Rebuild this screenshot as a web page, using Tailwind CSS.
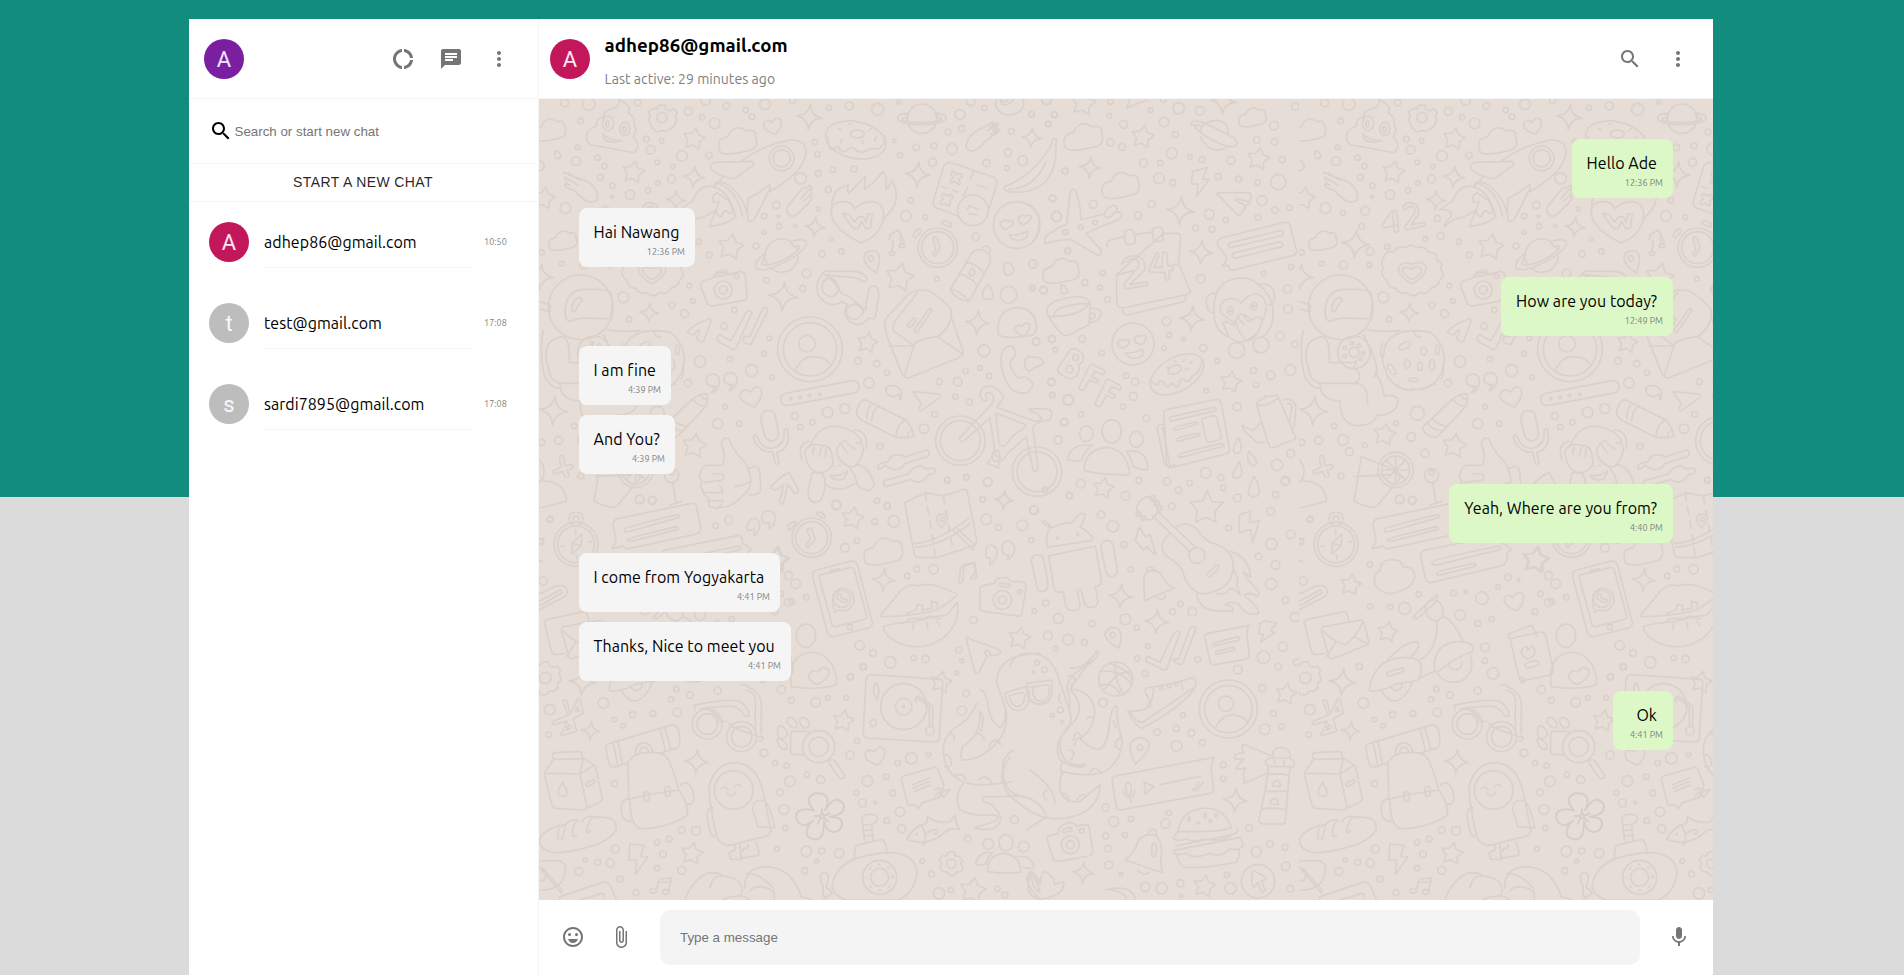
<!DOCTYPE html>
<html lang="en">
<head>
<meta charset="utf-8">
<title>Chat</title>
<script src="https://cdn.jsdelivr.net/npm/@tailwindcss/browser@4"></script>
</head>
<body class="h-screen overflow-hidden bg-[#dbdbdb] font-['Ubuntu','Noto_Sans',sans-serif] tracking-[0.05px] text-black">
<svg class="hidden">
  <symbol id="i-search" viewBox="0 0 24 24"><path d="M15.5 14h-.79l-.28-.27C15.41 12.59 16 11.11 16 9.5 16 5.91 13.09 3 9.5 3S3 5.91 3 9.5 5.91 16 9.5 16c1.61 0 3.09-.59 4.23-1.57l.27.28v.79l5 4.99L20.49 19l-4.99-5zm-6 0C7.01 14 5 11.99 5 9.5S7.01 5 9.5 5 14 7.01 14 9.5 11.99 14 9.5 14z"/></symbol>
  <symbol id="i-more" viewBox="0 0 24 24"><path d="M12 8c1.1 0 2-.9 2-2s-.9-2-2-2-2 .9-2 2 .9 2 2 2zm0 2c-1.1 0-2 .9-2 2s.9 2 2 2 2-.9 2-2-.9-2-2-2zm0 6c-1.1 0-2 .9-2 2s.9 2 2 2 2-.9 2-2-.9-2-2-2z"/></symbol>
  <symbol id="i-ring" viewBox="0 0 24 24"><path d="M11 5.08V2c-5 .5-9 4.81-9 10s4 9.5 9 10v-3.08c-3-.48-6-3.4-6-6.92s3-6.44 6-6.92zM18.97 11H22c-.47-5-4-8.53-9-9v3.08C16 5.51 18.54 8 18.97 11zM13 18.92V22c5-.47 8.53-4 9-9h-3.03c-.43 3-2.97 5.49-5.97 5.92z"/></symbol>
  <symbol id="i-chat" viewBox="0 0 24 24"><path d="M20 2H4c-1.1 0-1.99.9-1.99 2L2 22l4-4h14c1.1 0 2-.9 2-2V4c0-1.1-.9-2-2-2zM6 9h12v2H6V9zm8 5H6v-2h8v2zm4-6H6V6h12v2z"/></symbol>
  <symbol id="i-smile" viewBox="0 0 24 24"><circle cx="15.5" cy="9.5" r="1.5"/><circle cx="8.5" cy="9.5" r="1.5"/><path d="M11.99 2C6.47 2 2 6.48 2 12s4.47 10 9.99 10C17.52 22 22 17.52 22 12S17.52 2 11.99 2zM12 20c-4.42 0-8-3.58-8-8s3.58-8 8-8 8 3.58 8 8-3.58 8-8 8zm-5-6c.78 2.34 2.72 4 5 4s4.220-1.66 5-4H7z"/></symbol>
  <symbol id="i-clip" viewBox="0 0 24 24"><path d="M16.500 6v11.500c0 2.210-1.790 4-4 4s-4-1.790-4-4V5c0-1.380 1.120-2.500 2.500-2.500s2.500 1.120 2.500 2.500v10.500c0 .550-.450 1-1 1s-1-.450-1-1V6H10v9.500c0 1.380 1.120 2.500 2.500 2.500s2.500-1.120 2.500-2.500V5c0-2.210-1.790-4-4-4S7 2.790 7 5v12.500c0 3.040 2.460 5.500 5.500 5.500s5.500-2.460 5.500-5.500V6h-1.500z"/></symbol>
  <symbol id="i-mic" viewBox="0 0 24 24"><path d="M12 14c1.66 0 2.990-1.340 2.990-3L15 5c0-1.660-1.340-3-3-3S9 3.340 9 5v6c0 1.660 1.340 3 3 3zm5.300-3c0 3-2.540 5.100-5.300 5.100S6.700 14 6.700 11H5c0 3.410 2.720 6.230 6 6.720V21h2v-3.280c3.280-.480 6-3.300 6-6.720h-1.700z"/></symbol>
</svg>

<div class="h-[497px] bg-[#128c7e]">
  <div class="mx-auto flex h-[975px] w-[1524px] translate-x-[-1px] pt-[19px]">
    <aside class="flex w-[350px] shrink-0 flex-col border-r border-[#f5f5f5] bg-white">
      <header class="flex h-20 items-center border-b border-[#f5f5f5] px-[15px]">
        <div class="flex size-10 items-center justify-center rounded-full bg-[#7b1fa2] pt-px font-[Roboto] text-[22px] text-white/90">A</div>
        <div class="ml-auto flex gap-6 pr-3 text-[#757575]">
          <svg class="size-6" fill="currentColor"><use href="#i-ring"/></svg>
          <svg class="size-6" fill="currentColor"><use href="#i-chat"/></svg>
          <svg class="size-6" fill="currentColor"><use href="#i-more"/></svg>
        </div>
      </header>
      <label class="flex h-16 items-center pl-5">
        <svg class="size-6" fill="currentColor"><use href="#i-search"/></svg>
        <input class="w-64 pt-0.5 pl-[1.5px] font-['Liberation_Sans'] text-[13.333px] tracking-normal outline-none placeholder:text-[#757575]" placeholder="Search or start new chat">
      </label>
      <button class="h-[39px] rounded border border-x-transparent border-y-[#f5f5f5] pr-px pb-px font-['Liberation_Sans'] text-sm tracking-[0.4px] text-black/87">START A NEW CHAT</button>
      <div class="flex h-[81px] items-start pt-5 pl-5">
        <div class="flex size-10 items-center justify-center rounded-full bg-[#c2185b] pt-px font-[Roboto] text-[22px] text-white/90">A</div>
        <div class="ml-[15px] h-[46px] w-[210px] border-b border-[#f5f5f5] pt-2 text-base leading-6 whitespace-nowrap">adhep86@gmail.com</div>
        <span class="mt-3 ml-[10px] text-[9px] leading-4 text-[#808080]">10:50</span>
      </div>
      <div class="flex h-[81px] items-start pt-5 pl-5">
        <div class="flex size-10 items-center justify-center rounded-full bg-[#bdbdbd] font-[Roboto] text-[22px] text-white/90">t</div>
        <div class="ml-[15px] h-[46px] w-[210px] border-b border-[#f5f5f5] pt-2 text-base leading-6 whitespace-nowrap">test@gmail.com</div>
        <span class="mt-3 ml-[10px] text-[9px] leading-4 text-[#808080]">17:08</span>
      </div>
      <div class="flex h-[81px] items-start pt-5 pl-5">
        <div class="flex size-10 items-center justify-center rounded-full bg-[#bdbdbd] font-[Roboto] text-[22px] text-white/90">s</div>
        <div class="ml-[15px] h-[46px] w-[210px] border-b border-[#f5f5f5] pt-2 text-base leading-6 whitespace-nowrap">sardi7895@gmail.com</div>
        <span class="mt-3 ml-[10px] text-[9px] leading-4 text-[#808080]">17:08</span>
      </div>
    </aside>

    <main class="flex min-w-0 flex-1 flex-col bg-white">
      <header class="flex h-20 items-center border-b border-[#f5f5f5] pr-[23px] pl-[11px]">
        <div class="flex size-10 items-center justify-center rounded-full bg-[#c2185b] pt-px font-[Roboto] text-[22px] text-white/90">A</div>
        <div class="ml-[14.5px] flex h-full flex-col pt-[13px] whitespace-nowrap">
          <h3 class="text-[18.72px] leading-7 font-bold">adhep86@gmail.com</h3>
          <p class="mt-[9px] text-sm leading-5 text-[#808080]">Last active: 29 minutes ago</p>
        </div>
        <div class="ml-auto flex gap-6 text-[#757575]">
          <svg class="size-6" fill="currentColor"><use href="#i-search"/></svg>
          <svg class="size-6" fill="currentColor"><use href="#i-more"/></svg>
        </div>
      </header>

      <section class="relative h-[801px] overflow-hidden bg-[#e5ddd6]">
        <svg class="absolute inset-0 h-full w-full" fill="none" stroke="#dad1cb" stroke-width="5" stroke-linecap="round" stroke-linejoin="round">
          <defs><clipPath id="edge"><rect width="760" height="801"/></clipPath></defs>
          <g id="doodle" clip-path="url(#edge)">
            <!-- upper left -->
            <g id="gP" transform="translate(-269,-9) scale(.33333)">
              <path d="M950 145q-8-22 30-38q-4-25 22-27q-4-20 28-23q20-10 18-30q10 8 24 18q10 12 4 25q20 10 16 34q12 22-2 36q20 24 10 40q-6 10-20 6L965 165q-14-6-15-20zM998 132q20 20 58 20M1000 130q-4 20 16 24q30 6 40-4"/>
              <ellipse cx="1014" cy="100" rx="17" ry="22"/><ellipse cx="1064" cy="117" rx="15" ry="20"/><ellipse cx="1013" cy="101" rx="5" ry="9"/><ellipse cx="1063" cy="118" rx="5" ry="9"/>
              <path d="M1166 46h18l4 12l12 4l12-6l10 12l-6 12l4 10l-6 16l-12 10l-12 8l-14-2l-14 4l-14-10l-6-12l-6-12l4-12l-4-14l12-10l12 0zM1166 46l-4 12"/><circle cx="1176" cy="83" r="15"/>
              <path d="M880 250q6-6 16 4l34 12q50 16 53 52q0 20-22 18q-20-2-48-34q-30-8-29-18q6-4 16 2q-18-14-14-19q6-4 18 6l20 12M885 262l30 18M897 251l30 17"/>
              <path d="M1084 364l-28 44q0 8 10 5l38-8M1090 362q8-4 10 4l6 56q-5 8-13 3l-5-50zM1118 352q10-18 32-12q22 10 14 34l-20 30l38-6q8 4 2 9l-52 13q-10-3-6-12l28-40q4-16-8-18q-12-1-18 8q-10 2-10-6z"/>
              <path d="M1105 535q10-24 40-12q30-14 42 6q6 26-42 52q-36-18-40-46zM1117 537q8-12 26 0q20-13 32 2q0 14-30 30q-26-16-28-32z"/>
              <path d="M1060 505q8-26 30-18q14-22 34-14q20-14 36 0q26-6 36 14q24-2 24 22q22 10 12 28q16 20-4 34q0 20-24 22q-12 24-34 14q-20 18-38 2q-26 6-34-14q-26 0-26-24q-26-16-12-36q-10-20 0-30z"/>
              <circle cx="932" cy="652" r="97"/>
              <path d="M885 670q0-70 60-72q60-2 78 10q10 30-2 76q-20 4-60 0q-40 0-54 8q-20 6-22-22zM906 662q-2-30 22-40q14 4 4 14q-10 10-14 24q-6 8-12 2zM860 745q-40 10-30 70l10 40q10 25 40 25h90q24-6 16-30q0-10-18-14q10-10 12-24q-16 10-22 6h-60v-16q0-80-38-57zM1010 718q40 10 100 4M1000 735q60 110 30 125M870 880q0 52 60 52q0 75 58 75q50-6 50-30q70-4 65-50q-16-16-40-8q-6-40-26-70M890 880h90q35 4 33 62M820 720q-14 60 4 140q20 36 44 34M810 635l30 10v20l-30-8"/>
              <circle cx="972" cy="787" r="49"/><circle cx="972" cy="787" r="15"/><circle cx="965" cy="760" r="5"/><circle cx="987" cy="767" r="5"/><circle cx="1000" cy="790" r="5"/><circle cx="991" cy="806" r="5"/><circle cx="945" cy="773" r="5"/><circle cx="945" cy="799" r="5"/>
              <path d="M1062 790q0-50 60-66q50-6 80 4q30 20 40 66q6 50-30 86q-40 26-90 18q-50-20-56-60q-14-24-4-48z"/>
              <ellipse cx="1124" cy="767" rx="20" ry="9" transform="rotate(-25 1124 767)"/><ellipse cx="1181" cy="783" rx="9" ry="12"/><ellipse cx="1132" cy="822" rx="9" ry="13"/><ellipse cx="1170" cy="829" rx="7" ry="13"/><ellipse cx="1150" cy="869" rx="15" ry="5"/><ellipse cx="1085" cy="838" rx="8" ry="18" transform="rotate(-35 1085 838)"/><ellipse cx="1206" cy="825" rx="8" ry="16"/><ellipse cx="1222" cy="780" rx="6" ry="14"/><path d="M1057 760q-10 30 0 44M1100 885q30 24 50 10M1175 900l40-18M1237 830q8 20-4 36M1150 725q10 20 22 16"/>
              <path d="M1180 1010l90-85q20-14 42-14q2 24-6 40l-80 85q-16 12-30 0q-20-10-16-26zM1190 995q8 20 42 28M1206 982q10 22 42 26M1270 925q6 20 30 24M1290 914q4 10 20 14"/>
              <path d="M994 1100l58 22q30 10 60 40l-70 85q-18 14-70-14zM975 1160l110-6"/><circle cx="1097" cy="1140" r="53"/><circle cx="1097" cy="1140" r="42"/><path d="M1097 1100v80M1057 1140h80M1069 1112l56 56M1069 1168l56-56"/>
              <path d="M870 1098q14-4 12 10l4 20l20-4q8 6-2 12l-14 6q10 14 4 18q-8 4-12-6l-4-10l-24 8q-10-2-2-10l22-12q-8-24-4-32z"/>
              <circle cx="1205" cy="1157" r="21"/><circle cx="1205" cy="1148" r="7"/><path d="M1208 1178l10 60M1200 1246l36-12M802 1105q20 15 20 40t-16 30M800 215q20-8 23 14q-4 14-16 12M858 182q16 6 14 20q-8 8-16 0q-4-6 2-20z"/>
            </g>
            <!-- upper middle -->
            <g id="gQ" transform="translate(141,-9) scale(.33333)">
              <path d="M180 215q70-50 150-65q50-2 48 40q-10 60-110 115M92 235q-2-16 16-18l102-3q16 0 8 12l-45 34q-15 9-30 3q-42-14-51-28zM205 325q40-20 58-38q10-6 7 8l-45 90q-10 16-20 6q-5-26 0-66zM130 260l-30 30q-45-6-62 44l-40 25q40-4 35 20q-20 20-20 32q28-30 50-26l46-24q-10 16-20 48q50-4 80-30M106 278q60 12 82 100M120 274q60 20 82 95M98 290q50 10 68 90M110 308q-20 16-8 30l16-2q-20 40 6 44q4-16 14-18q14 14 22 4q-8-36-30-46z"/>
              <circle cx="305" cy="205" r="37"/><circle cx="305" cy="205" r="26"/>
              <ellipse cx="527" cy="150" rx="92" ry="55" transform="rotate(12 527 150)"/><ellipse cx="532" cy="132" rx="21" ry="12"/><path d="M443 140q0 40 18 40q6-18 16-6q6 18 22 8q12-12 24-6q14 16 34 8q20-12 32-6q26-8 26-40M475 114l8 8M506 102h10M487 148l-6 10M546 152l4 8M575 114l-8 8M590 140l-6 14"/>
              <circle cx="726" cy="86" r="44"/><path d="M682 70q-34 0-28 20q20 14 72 14t72-16q4-16-26-18v12q14 0 12 6q-20 10-58 10t-60-8q0-10 16-8z" fill="#e5ddd6"/>
              <path d="M455 365q-5-70 50-80q-5 15 2 25l50-52q-4 20-4 40q30-20 55-53q14 8 10 54q12-10 16-28q40 60-24 116M543 459q-90-44-90-96q4-30 40-28q26 2 30 22q20-20 48-22q40 0 40 40q-4 60-68 84zM487 370l32 46h16l10-22l12 22h14l6-44h-14l-4 24l-10-16h-12l-14 16l-16-24z"/>
              <path d="M322 350l45-55q6-6 10 2l8-10q10-2 10 8l-2 26q6 6-4 14l-34 36q-14 12-28 4q-10-12-5-25zM362 327l28-32M372 332l22-20"/>
              <path d="M860 160q6-30 54-50l24-14q6 4-2 12l-8 6l22-14q8 2 2 10l-14 12l14-6q8 4 0 12l-20 14l-18 14q-20 26-40 28q-22-4-14-24zM922 122l30-18M932 134l28-16"/>
              <path d="M790 230q8-14 24-12l124 42q16 8 12 24l-26 80M790 230l-30 105q-4 14 12 20l64 24M882 244l-12 24M850 318l12-26M786 290l14 4M818 300l16 6"/><circle cx="879" cy="361" r="46"/>
              <path d="M816 245q10-4 10 10q14-8 22 0q-2 8-12 12q8 14 2 16q-8 0-14-10q-12 10-14 2q2-8 10-12q-10-12-4-18zM786 312q8-4 12 6q12-8 22 2q-2 8-12 12q8 14-2 16q-6-2-8-8q-14 8-18 0q0-8 10-12q-6-10-4-16zM892 284l28 10M862 358l6-10l28 10M866 372l26 2"/>
              <path d="M975 290q86-36 136-118l8-26h10l-2 20q6 60-26 104q-40 46-118 34q-16-6-8-14zM986 298q80-4 110-80"/>
              <circle cx="1010" cy="405" r="70"/><path d="M960 400q14-16 24-6q12-8 16 4q-2 14-26 20q-14-8-14-18zM1014 384q16-14 22-4q12-10 18 0q-2 14-26 26q-12-10-14-22zM988 434q30 4 54-10q4 22-20 26q-28 4-34-16zM950 30q-10 10 4 30q30 30 70 0q14-20 2-34M960 30q10 30 40 0M964 30q10 12 20 0"/>
              <circle cx="773" cy="473" r="59"/><circle cx="773" cy="473" r="48"/><path d="M760 442q8-4 12 4l8 28l-14 24q-8 0-6-8l8-16l-8-20zM700 440q0-20 20-24q8 10-14 28zM784 400q8-16 28 0q4 10-2 12zM630 435l26-16l16 36M640 450l-4 36M628 448l2-14M660 440l4 20"/><ellipse cx="636" cy="490" rx="8" ry="6"/><ellipse cx="666" cy="467" rx="8" ry="6"/>
              <path d="M590 550q-40-26-38-48q6-22 28-20q20 4 18 30q-2 16-10 38z"/><circle cx="573" cy="505" r="8"/>
              <path d="M810 600l64-108q10-18 36-12q26 10 20 38l-62 116q-40-4-58-34zM810 600q20-6 58 34M836 552q36 4 56 36M858 516q38 6 56 38M908 472q16-10 24 8l-6 14M876 535q14 8 6 20q-8 6-14-2q-2-8 8-18z"/>
              <circle cx="305" cy="497" r="50"/><path d="M256 490q-34 24-28 42q10 18 70-8t82-60q0-24-44-10q-6 6 6 16l12-2q10 4-4 16q-40 34-90 42q-20 0-10-14z" fill="#e5ddd6"/>
              <path d="M62 590q0-16 14-20l24-6q4-18 20-20q20-10 26 10l34-10q14 0 16 16l5 60q0 10-14 12l-88 16q-14 2-18-12zM106 560l0-8l28-5q8 4 2 10z"/><circle cx="130" cy="600" r="27"/><circle cx="130" cy="600" r="12"/><circle cx="169" cy="559" r="7"/>
              <path d="M412 600q-4-28 14-48q6-12 20-8h80q34 6 34 24q-6 12-16 4q-8-10-30-10l-84-8q30 10 50 50q6 10 22 12l54 44q4-30 10-55q-2-10 10-16q20-8 20 30q-4 30-10 64q-8 6-18 0q-32 36-62 8q-20-24-4-48q-10-4-14-8q-36 20-62-6q-14-12-14-29zM430 575q-10 20 2 34q20 20 36 4q16-20 0-36q-14-26-38-2zM500 660q10-20 28-16q22 10 22 22q-10 26-36 20q-20-8-14-26z"/>
              <path d="M614 700q0-14 20-32l50-54q12-14 50-14q20 0 70 46q14 12 8 30l38 110q0 14-30 24l-130 52q-10 6-22-6l-48-120zM640 722q-4-14 6-30l66-84M640 722l60 44q16-20 72-26q36-24 42-64M628 768h74l-30 92M772 740l76 52M812 686q-4 28-34 52M682 710q0-8 20-28q10 4 4 10q-10 24-24 18zM702 720l44-62q10-6 8 6l-42 62q-8 4-10-6z"/>
              <circle cx="390" cy="778" r="97"/><circle cx="390" cy="778" r="80"/><circle cx="381" cy="761" r="25"/><path d="M348 838q18-42 60-38q32 4 46 26"/>
              <path d="M22 726q4-8 30-24l34-16q8-2 6 10l-20 56q-4 6-14 2l-8-10l10-24h-8l-10 14q-10 2-20-8zM112 742q4-12 14-4l28 14l44-84q10-10 18 0l-48 106q-8 8-14 2l-36-20q-8-6-6-14zM192 740q10-2 16 2l40-86q12-8 16 6l-52 102q-24-4-22-14z"/>
              <path d="M95 908q4-14 12-20q-26 4-28-16q0-20 20-20q24 2 18 30q-6 24-22 26zM148 902q4-14 10-18q-24 2-26-16q2-20 20-20q24 4 18 28q-6 22-22 26zM660 930q0-12-4-18q-12 14-30 4q-18-20 0-28q30-6 38 18q2 14-4 24z"/>
              <path d="M302 930q0-16 14-20l200-38q20 0 22 16q0 16-12 20l-200 38q-20 2-24-16z"/><circle cx="332" cy="926" r="4"/><circle cx="360" cy="922" r="4"/><circle cx="389" cy="917" r="4"/><circle cx="419" cy="913" r="4"/>
              <path d="M530 960q10-30 26-31l120 60q20 20 26 50q-30 8-60 0l-100-50q-14-12-12-29zM560 985q0-30 18-46M575 992q2-30 22-46M648 1038q2-30 24-46M684 1042q-2-14 8-18"/>
              <path d="M697 904l80 8q8 4 2 10l-54 40q-8 2-6-12l6-8z"/>
              <path d="M245 1000q-8-38 20-38q20 0 22 20l8 44q4 20-16 26q-20 4-26-20zM220 1042q0-10 10-6q14 44 50 38q36-10 32-50q4-12 12-4q8 56-34 68l8 30q-4 8-12 2l-8-34q-46 2-58-44zM272 1190q40-40 56-42l28 54q-4 12-14 6l-18-26l-14 58q-8 6-12-4l14-54q-20 20-30 18z"/>
              <path d="M60 1150q8-26 26-24h40q14-20-2-66q2-14 12-16q14 0 20 24q10 20 30 40q20 16 26 60q2 26-16 42q-40 40-60 40q-40 8-50-4q4-20-6-26q-14-10-12-20q-12-18-2-28q-10-10-6-22zM98 1152h30q8 16-8 20l-50 6M74 1208h54q0-14-10-22M84 1232h44q-4 16-20 26M165 1190q30-4 46-16M206 1136l24-8q14 10 11 75q-10 16-32 10"/>
              <path d="M390 1070q20-60 76-62q60 8 78 46M365 1110q-14-50 22-56M525 1020q40 2 34 56M430 1066q-50-10-56 22q10 60 50 62q40-14 34-44q-4-40-28-40zM425 1070l-8 30M440 1070l-4 30M402 1072l-4 20M530 1060q20-6 20 20q-10 50-40 52q-40-20-40-52q4-20 30-30M482 1062l20 26M500 1058l24 20M395 1150q40-14 40 30q-2 56-30 58q-24-4-20-44q8-20 10-44zM510 1134q20 30 22 50q10 16 36 18q16-10 14-24q-16-46-48-54M434 1180q40 36 90 0M452 1156q30 4 50-12q-4 26-24 26q-20 0-26-14zM463 1128h4M478 1126h4"/>
              <path d="M594 1136q-2-14 10-16l20-6q10-22 32-20q14 2 18 8l64-22q10 2 10 12q0 6-6 8l-66 20q-16 24-42 18l-20-12l-14 12zM610 1180q0-10 10-10l66-18q16-26 38-24l18 10q20-8 24 2q2 10-20 14q-26 36-52 14l-74 22q-8 0-10-10z"/>
              <circle cx="841" cy="1052" r="74"/><circle cx="841" cy="1052" r="60"/><circle cx="1071" cy="1145" r="74"/><circle cx="1071" cy="1145" r="60"/>
              <path d="M838 1044l96-100q12-16 4-30q-16-14-22 2q10 14 0 18q-14-4-16-20q0-24 30-26q24 4 42 34l-22 30l114 42q16 0 22-6q-20-26-36-24q-4-10 2-8l50 1q14 4 14 16q0 18-20 20q-20 0-38 18l16 120q-4 18-14 10l-22-100l-58 52q-12 24-38 20q-14-16 2-34l-14-96l-78 70q-12 8-14-9zM948 970l90 34q0 6-40 34l-24 30q-16 2-18-14zM952 1080q14 12 0 20q-16-4 0-20M940 1094l-18 26l34 14M960 1100q-4 20-6 34"/>
              <circle cx="986" cy="614" r="25"/><path d="M955 735q-8-80 58-82q50 4 57 55q0 30-30 30q-60 10-85-3zM1002 716q12-14 22-6q12-18 24-6q4 20-18 34q-24-8-28-22z"/>
              <path d="M965 790q10-24 30-22q14 10 8 34q-14 8-12 22q8 34 30 40q18-10 36 14q6 8-10 26q-16 14-50-4q-42-50-32-110zM1034 816q4-22 24-14q16-6 32 12q4 10-24 18l-20 12q-14-14-12-28zM976 516q24 4 26 24q-8 20-24 14q-12-12-2-38zM924 584q20 24 14 40q-14 10-28 0q-8-20 14-40z"/>
            </g>
            <!-- upper right -->
            <g id="gR" transform="translate(491,-9) scale(.33333)">
              <path d="M120 310q4-20 18-6q16 50 14 86l72-18q4-20 26-26q14 0 10 20q18 0 16 14q-10 10-38 20l-70 30l44 48q6 16-10 18l-80-48q-30 0-76 12q-6-20 14-30q30-20 50-26q6-50 10-94zM224 378q10 14 30-12"/>
              <path d="M232 470q-6-16 10-20l40-10M316 434l52-8M400 430h40q12 0 12 12l-6 80l34 78q4 10-10 14l-190 40q-20 0-20-20v-80zM262 554l50-12M430 524l16-2M278 655q-2 20 14 20l170-40q8-4 4-18M284 432q-4-10 10-12q16-4 18 8l5 26q0 8-12 8q-18 6-20-8zM368 424q-2-10 12-12q16-2 18 8l2 24q0 10-14 10q-12 4-16-6zM275 520q10-24 44-22q34 10 24 44l-44 42l50-8q8 4 2 10l-60 10q-14-4-6-16l40-50q6-24-20-24q-16 10-30 14zM378 490q10-4 8 8l-14 34h24l2-44q8-6 12 4l4 36q18-2 16 10l-12 6v22q-6 10-12 0v-18l-46-2q-6-6 0-14z"/>
              <path d="M495 105q-14 4-10-8q4-10 40 2l70 36q28 14 26 26q-10 20-60-4t-66-46q0-10 14-4M510 125q4-30 50-34q40 6 34 44M512 142q34 60 84 26"/>
              <path d="M488 244l44-12l-14 36h20l-38 50l4-36h-20z"/><path d="M560 310q4-4 90-2q16 0 14 10l-6 18l-36-10q-10 2 0 8l26 14l-16 24q-6 6-12 0zM660 340l-14 8"/>
              <path d="M562 464q-2-14 12-20l186-46q16-4 20 8l20 76q2 10-10 14l-180 44q-10 4-16-14l-18 2q18-18 12-30zM594 466q0-6 8-8l148-36q10 0 10 8q0 6-8 8l-148 34q-8 0-10-6zM606 498q0-8 8-10l134-32q10 0 10 8q0 6-8 8l-134 32q-8 2-10-6z"/>
              <path d="M552 670q-6-100 78-106q50-4 90 60q20 50 0 90q-10 24-26 26M552 670q0 50 40 70M556 610q-40 0-22 50q10 10 18 10M684 584q50-10 50 40q-6 20-18 20M570 660q0-30 30-34q24 0 34 14q16-24 40-28q30 0 36 40q-10 40-16 50q-20 50-40 50q-30-20-34-50q-50-30-50-42zM582 704q-10-10 10-8l20 10q10-30 20-34q16 0 30 20q20-14 30-10l4 10q-4 40-40 56q-30 20-60-10q-8-14-14-34zM624 684l18 20M640 676l16 20"/><ellipse cx="601" cy="662" rx="9" ry="12"/><ellipse cx="671" cy="648" rx="9" ry="12"/><circle cx="601" cy="662" r="3"/><circle cx="671" cy="648" r="3"/><circle cx="620" cy="781" r="24"/><circle cx="693" cy="765" r="24"/>
              <path d="M50 665q0-24 40-36q70-20 90 6l-2 68l-64 34q-14 2-28-16q-30-34-36-56zM56 680q100 0 124-44M72 682q-4-20 26-30q50-14 80-10M182 656q24-4 32 12q-2 26-34 30M182 672q10-6 14 4q-2 10-14 12M94 584q14 4 20 20q-4 8-16 8q-8-6-4-28z"/>
              <circle cx="309" cy="762" r="63"/><path d="M262 758q8-12 22-6q8-6 14 0q0 14-18 22q-18-4-18-16zM312 748q8-16 18-8q14-10 18 0q0 16-16 24q-16-4-20-16zM286 790q40-4 52-12q6 22-14 26q-28 4-38-14z"/>
              <path d="M120 780q8-8 24 0q18 10 16 26q-2 14-14 16q6 20-8 36q-14 14-28 6l-22-14q-8-8-4-16zM178 828q4-8 12-4l30 16q8 6 0 14l-26-10l-8 16l18 10q4 10-8 8l-18-8l-16 28q-8 6-16-4zM228 872q6-6 12-2l30 16q8 6 0 14l-26-10l-8 14l18 12q4 10-8 8l-18-8l-14 30q-12 8-20-4z"/><circle cx="137" cy="803" r="9"/><circle cx="118" cy="838" r="11"/>
              <ellipse cx="441" cy="853" rx="88" ry="50" transform="rotate(-30 441 853)"/><ellipse cx="434" cy="839" rx="21" ry="13" transform="rotate(-20 434 839)"/><path d="M362 870q20 26 26 4q10-8 16 10q10 14 18-4l12 6q10 16 16-14q6-10 16 0q14 6 20-14q20 0 30-46M410 832l8 4M432 812l8 4M464 808l-6 6M474 836l-10 4M486 814l-8 6"/>
              <path d="M402 976q-4-14 10-18l140-28q18-4 22 10l24 134q4 14-10 18l-160 40q-16 4-18-10zM402 1002q-24 0-20 16l20 96q4 20 24 16l8-6M398 1012l22 116M420 988q-2-6 6-8l124-28q10 0 8 10l-128 30q-10 4-10-4zM430 1016q0-4 66-20q8 0 8 6l-64 18q-10 2-10-4zM438 1048q0-4 64-18q8 0 8 6l-64 18q-8 0-8-6zM444 1096q0-6 130-36q8 0 8 8l-128 34q-10 0-10-6zM516 992q0-6 6-8l26-6q10-2 12 6l14 56q2 8-8 10l-26 6q-10 0-12-8z"/>
              <path d="M680 942q0-10 30-22l32-4l44 100l12 30l-70 28q-10 0-14-16l-20-66zM680 942q20 14 66-18M704 922l2-6M758 930q30-10 40 20l-6 60M770 940q14 0 16 12l-8 44M690 1000l-20 22l-34-16q0 14 30 38q16 20 40 12M625 1042q-20 34-12 46q14 6 20-6q4-16-8-40zM656 1084q-8 24 6 40q14 8 18-6q0-14-24-34zM628 1116q-24 34-20 44q10 10 24 0q8-14-4-44zM672 1158q-20 40-16 56q14 14 30 0q6-24-14-56z"/>
              <ellipse cx="169" cy="1031" rx="20" ry="24"/><ellipse cx="245" cy="1024" rx="29" ry="35"/><ellipse cx="319" cy="1048" rx="20" ry="24"/><path d="M163 1140q0-60 66-68q60 6 70 74q-2 14-20 8q-60 0-108-10q-8 0-8-4zM112 1108q10-50 76-42q-24 14-34 46q-24 4-42-4zM290 1084q60-10 64 54q-20 4-42-8M290 1084q14 20 20 46M0 345q50 40 10 110M298 30l-8 24l60-24"/>
            </g>
            <!-- middle left -->
            <g id="gU" transform="translate(-9,201) scale(.33333)">
              <path d="M22 545q80-10 88 54q0 6-6 6L22 626"/>
              <circle cx="138" cy="733" r="66"/><circle cx="138" cy="733" r="55"/><circle cx="138" cy="657" r="21"/><circle cx="138" cy="657" r="9"/><path d="M156 702l-30 28v32l28-26zM126 730l28 6M136 690l2 10M140 766v10M94 740l8-2M176 728l8-4"/>
              <path d="M250 680q-4-20 14-24l220-46q14-2 16 12l12 60q0 16-12 20l-204 44q-10 4-16-8l-34 8q12-16 12-28zM282 688q0-4 158-44q8 0 8 8l-156 44q-10 0-10-8zM294 718q0-4 144-38q8 0 6 8l-140 36q-10 0-10-6zM392 770q-2-14 14-20l220-44q12 4 12 24l28 18q-20 10-14 26q-4 20-20 24l-210 50q-14 0-16-14zM424 786q0-6 202-48q8 4 6 10l-196 48q-10 0-12-10zM440 818q0-4 110-28q8 0 8 8l-110 28q-8 0-8-8z"/>
              <path d="M650 685q4-30 24-30q18 6 14 30q-8 20-16 22q2-14 0-20q-20 10-22-2zM696 660q-4-26 18-28q22 2 22 24q-4 26-20 30q4-14 2-18q-16 6-22-8zM1368 760q-4-26 18-24q20 6 14 32q-10 24-20 26q2-14 0-20q-14 2-12-14zM1416 750q0-28 20-26q24 8 16 34q-10 20-20 22q4-10 2-16q-14 2-18-14z"/>
              <circle cx="845" cy="713" r="59"/><circle cx="845" cy="713" r="48"/><path d="M834 686q8-4 12 4l10 28l-22 24q-8 0-6-8l14-18l-10-22zM774 690q-4-20 22-26q2 16-22 26zM858 638q20-6 28 14q-10 8-28-14z"/>
              <path d="M1126 620q-4-14 10-18l50-24l54 10l60-20q10-2 12 8l28 144q0 14-12 18l-104 34h-56q-16 0-16-14zM1154 730q60 0 162-74M1156 742q80-4 162-70M1270 690l60 60M1280 684l56 52M1234 684q-20-24-12-36q14-12 28 0q6 14-16 36z"/><path d="M1186 580l30 190M1240 590l30 170" stroke-dasharray="22 20"/><circle cx="1237" cy="658" r="6"/>
              <path d="M848 830q-4-16 12-20l100-26q18-4 22 10l44 170q4 16-10 20l-100 24q-18 6-24-10zM866 826l96-24q8 0 10 6l38 140q2 8-8 10l-84 22q-10 2-12-6l-40-148zM902 812l24-6M914 936q-20-70 30-72q36 14 26 46q-14 30-44 20z"/><circle cx="936" cy="896" r="26"/><path d="M924 880q-8 14 6 22q12 10 22 2q-2-10-12-8q-10-4-8-14z"/><circle cx="960" cy="981" r="8"/>
              <path d="M1052 946l60-74q30-24 50-14q20-10 60 0q60 20 58 28q-20 20-60 44q-80 20-166 20zM1060 980q40-14 90-14q70-20 100-20q24-30 32-38q10 60-40 104q-60 44-130 20q-50-24-52-52zM1130 940l28-10l4-16l16 2l-2 16l30-8l-2-20l18 4v16M1120 970l20-14h40l20-8l30 10M1150 974v16M1190 966l4 20M1220 962l8 14"/>
              <path d="M1350 870q0-12 12-14l32-6q4-18 20-16q20-6 28 10l34 2q14 4 12 16l-12 78q-4 10-14 8l-100-14q-14-2-12-14zM1408 856q0-8 8-6l22 2q8 6 0 10l-24-2z"/><circle cx="1417" cy="900" r="28"/><circle cx="1417" cy="900" r="12"/><circle cx="1469" cy="875" r="6"/>
              <path d="M1308 1016q6-6 14 2l82 30q10 6 6 14l-28 6q-4-20-16-16q-6 6 6 16l-26 50q-8 8-12-4zM1290 820q0 20-6 26q10 6 14-2l4-46l30-10l4 34q-14 6-14 14q12 4 18-6l-6-42l-24 4q-20 4-20 28z"/>
              <ellipse cx="828" cy="1007" rx="29" ry="35"/><path d="M784 1160q-14-96 60-104q70 8 76 90q-4 14-20 14q-60 10-116 0zM835 1130q8-26 28-14q18-24 34-4q4 20-34 42q-20-4-28-24zM655 1014q-4-12 10-16l60-22q14 24 14 34M660 1016l90-20q14 0 18 14l22 100q0 14-14 16l-76 16q-12 0-14-14zM694 1060q0-20 18-20v12l14-14q16 14 4 30q-20 20-36-8zM706 1094q0-6 32-12q12 4 6 14l-30 8q-10 0-8-10z"/>
            </g>
            <!-- middle right and lower right -->
            <g id="gV" transform="translate(491,381) scale(.33333)">
              <path d="M36 125q6-8 14 2l16 16q30-16 60-15l20-24q10-8 18 0q4 14-14 36q30 20 38 34q2 6-4 8L52 202q-8-40 10-60q-20-6-26-17z"/><circle cx="83" cy="174" r="3"/><circle cx="143" cy="163" r="3"/>
              <path d="M56 228l140-30l18 104q4 14-18 18l8 46q-4 16-20 16q-16 0-22-14l-8-38h-12l8 44q0 16-20 18q-20 0-24-18l-6-38q-24 4-28-10zM4 244q2-20 20-20q14 2 18 16l12 74q0 18-18 20q-14 0-16-16zM212 200q4-18 20-18q14 0 18 16l12 70q0 20-16 22q-14 0-18-14z"/>
              <path d="M320 90q2-28 26-38q20-6 28 16q12 10 8 30q-14 30-32 18q-20-2-30-26zM368 108l110 106M386 96l112 108"/><circle cx="368" cy="55" r="8"/><circle cx="380" cy="70" r="8"/><circle cx="388" cy="84" r="7"/><circle cx="325" cy="102" r="7"/><circle cx="340" cy="114" r="7"/><circle cx="501" cy="226" r="24"/>
              <path d="M418 160q-40 40-6 70q50 30 50 60q30 60 70 50q80-14 78-90q-4-40-60-60q-30-10-50-44q-30-24-60-6M532 282l26-26q10-2 8 10l-26 24q-10 2-8-8zM500 342q10 50 60 50l50 2q0-14-24-20q10-12 40-2q20 40 60 28q0-20-44-54q20-14 38 4q20-6-20-44q-30-40-14-26q14 10 16 12q-4-60-60-78M610 270q20 30 10 44l10 30q-20-20-30-18q-20 24-40 14"/>
              <path d="M316 180l12-40l18 30l14-6l18 60q-20-10-24-24l-14 10zM628 106l34-14l-4 36l30-6l-20 66l-6-40l-34 10zM344 362q-4-66 0-80q20-20 46-4q20 40 44 46q-50 20-90 38zM352 278q-6-14 8-18q14 2 12 14M380 352q10 10 24 2l2-10M532 32l14 34h34l-26 28l4 32l-30-14l-30 14l4-34l-22-26l38-4z"/>
              <path d="M266 505q-46-26-40-46q14-24 40-12q14 20 0 58zM248 457a8 8 0 1 0 .1 0M348 535q4-10 16 0l26 12l42-88q14-10 18 0l-40 108q-4 6-10 2l-46-22q-8-4-6-12zM428 540q8-6 18-2l34-94q10-10 18 2l-40 104q-8 10-30-10zM524 470q0-8 10-10l122-24l-6 24l8 66q0 8-10 12l-94 16q-12 0-14-10zM548 494q0-6 76-24q8 4 4 10l-70 16q-8 2-10-2zM556 518q0-6 54-16q8 4 4 8l-50 12q-8 2-8-4zM690 430l16-8l34 8l-18 20l12 8l-42 28l8-22l-14-4z"/>
              <circle cx="257" cy="597" r="51"/><path d="M210 575q60-10 96 40M222 630q40-60 78-54M257 546q-8 50 24 98M238 550q80 30 66 60M210 615q50-10 60 34"/>
              <path d="M345 635q0-12 10-12q50-4 134-30q14 6 6 30q-40 60-160 122q-20-8-42-52q50 4 72-20zM300 696q20 34 40 30l150-102M370 626q4 30-20 50M452 600l6 28"/><circle cx="393" cy="625" r="5"/><circle cx="417" cy="619" r="5"/><circle cx="439" cy="611" r="5"/>
              <circle cx="595" cy="687" r="87"/><circle cx="595" cy="687" r="71"/><circle cx="588" cy="671" r="23"/><path d="M558 740q20-36 50-36q30 4 46 22"/>
              <path d="M-60 560q10-40 60-40q70 0 90 90q10 20 20 60q30 60-10 90q-30 40-10 80q30 24 70 20q8 0 6-8q-40 10-62-14q-40-60 26-110q40-50-10-100l80-115q-40 60-80 50M204 516q4 20-50 50q-60 40-36 80l2 60M120 628q60 0 74 60q0 60-44 88q80 80 88-46q10-60 24-50q-4 40 14 100q0 60-50 94q-50 20-130 0q-10 40-6 60q20 40 60 30l60-50q0 60-60 88q-100 40-180-30q-90-60-30-142M132 800q10-40 22-22M0 870q80 60 74 100M96 850q-10 30 4 32"/>
              <path d="M115 590q20-10 20 14l-14 12M90 640q-10 20 4 30M172 716q10-10 20-2M130 780q0-20 16-22l10 16M118 810q10 0 14 10l-8 20M250 724q6 10 8 20M276 774q-20 0-20 26l16 10M178 880q14-30 36 0M100 940q20 8 14 24M140 960q20-26 30-10M50 930q-20 14 0 30M-10 610l76-10q4 60-20 70q-60 14-56-60zM10 620q50-10 48 0q0 60-40 40q-14-20-8-40z"/>
              <path d="M316 852q-24-50-12-66q26-26 52 0q10 24-40 66zM330 795a8 8 0 1 0 .1 0"/>
              <path d="M246 900q0-8 10-12l295-56l-8 30l8 66q0 8-10 12l-270 50q-10 2-12-8zM286 916q2-10 10-8q10 4 8 30q-4 10-12 4zM280 930q4 24 20 22q14-4 14-20M300 952l4 16M342 906l30 14l-26 22zM390 914l124-26M486 926l6 6l14-26M500 932l20-26"/>
              <path d="M640 792l90 38M640 910l78-32M640 792q-10 14 4 26l-14 2q-24 4-14 18l26-2q-20 20-24 32l30-4q-16 20 0 44M728 826q0-20 20-24q34 0 32 30M706 842q10-10 26-8h48q20 14 10 26h-70q-14-4-14-18zM714 862q0 40-28 160q4 10 14 10h56q10 0 10-10l14-162M706 934h68M694 988q40-8 76 2M716 884q40-6 58 2M730 918v-10q10-12 20 0v12zM722 972v-10q10-12 22 0v12zM734 840v18M764 840l-4 20"/>
              <path d="M444 1054q10-66 84-70q60 4 76 60q-40 14-160 10zM444 1054q-14 16-14 22q16 10 40 0q20 14 50 2q60 8 90-16q20-6 10-20M430 1112l200-40q10 20 10 26q-20 16-40 8q-30 30-60 14q-50 20-70 0q-40 10-40-8zM438 1120q10 40 30 42q60 4 150-16q10-10 10-36M436 1098l180-36"/><ellipse cx="477" cy="1018" rx="3" ry="6"/><ellipse cx="525" cy="1007" rx="3" ry="6"/><ellipse cx="558" cy="1005" rx="3" ry="6"/><ellipse cx="505" cy="1028" rx="4" ry="3"/><ellipse cx="541" cy="1023" rx="4" ry="4"/>
              <path d="M52 1080q-2-12 10-14l22-6q2-24 22-28q24-10 32 6l24-4q14-2 16 10l10 66q2 14-12 18l-90 16q-16 2-18-12zM98 1048l26-6q4 8 0 10l-22 6q-8-2-4-10z"/><circle cx="121" cy="1094" r="27"/><circle cx="121" cy="1094" r="12"/><circle cx="155" cy="1052" r="7"/>
              <path d="M285 1140q30-20 40-60q20-20 50-14q20 10 20 60q-6 10 2 52q-60-20-112-38zM355 1064q0-16 14-16q14 4 10 20M322 1170q20 20 34 8M366 1100q0-14 10-8q8 14-2 38q-12 6-8-30z"/>
              <circle cx="684" cy="1204" r="50"/><path d="M666 1180q0-10 8-6l32 18q6 4-4 8l-8 4l12 26q-4 8-12 4l-12-26l-10 14q-8-4-6-42zM226 1230q80-20 90 30M240 1228q50 10 50 32"/>
              <path d="M30 1258q-60-60-26-84q20 14 26 40q0-30 14-40q30 16 30 40q20-10 28-6q0 40-72 50zM0 1186q-20 60 30 72"/>
            </g>
            <!-- lower left -->
            <g id="gS" transform="translate(-269,381) scale(.33333)">
              <path d="M800 345l60-28q30-6 32 20q-4 10-10 14l-74 38M800 368l70-38q10 4 4 10l-66 38M824 430q-4-8 10-12l100-22q16-2 18 8l6 24M824 430l20 84q4 10 14 10l28-4M874 450q-2-8 8-10l110-20q8 0 10 6l14 58q2 10-8 12l-100 40q-8 2-12-6zM876 450q40 40 70 44q30-20 54-70M890 530l28-46M1010 490l-34-18"/>
              <circle cx="826" cy="594" r="17"/><path d="M800 560l10-6l8-8h16l4 12l12 4l12-4l10 14l-6 12l6 6v14l-10 6l2 14l-14 12l-10-4l-10 12h-18l-6-10"/>
              <path d="M878 662q8-4 12 0l10 40q10-20 24-46q8 0 8 8l8 36l-30 16l10 36q-40 16-48 12l20-40l-44 10q-4-6 2-10l44-18zM916 692l6-14l6 18zM888 750l10-18l6 12z"/>
              <path d="M1034 300q-4-20 16-28q0-34 36-32q30-2 32 20q40 0 36 34q-10 30-34 34q-30 20-60 8q-30-14-26-36z"/>
              <path d="M1150 410l70-66q4 4 0 20l-56 50q-10 4-14-4z"/><ellipse cx="1213" cy="391" rx="26" ry="32" transform="rotate(-20 1213 391)"/><path d="M1240 410q30 10 60 76M1220 424q6 80-50 116M1064 550q60-70 100-64q10 20-28 50M1018 630q0-40 40-80q60-30 106-10q20 20 0 60q-40 10-60 10q-70 34-86 20zM1070 578q20-8 48-14q10 8-6 14l-34 10q-10-2-8-10zM1166 594l50-20M1214 576q-10-90 80-92q40 4 34 30q-50 20-80 42q-20 20-34 20zM1220 576q20 40 70 28q50-24 30-80M1256 552a20 20 0 1 0 40-6M1054 634q50 70 94-28M1084 622a17 17 0 0 0 32-8"/>
              <path d="M848 834q-2-14 6-16l74-4q10 0 8 14v8l-80 2zM850 838l-26 40v8l22 90q4 10 14 10l80 4q8 0 10-6l44-20q4-6 2-14l-20-92l-36-24M824 880l106 2l42-26M930 882l22 104M940 836l-10 46M878 908q-20 26-10 38q14 8 20 0q8-14-10-38zM948 910l22-12q6 4 4 10l-22 12q-6-2-4-10z"/>
              <path d="M808 1080q10-30 60-44M864 1076q-4-40 22-42l-8 42q-6 6-14 0zM908 1068q-4-36 18-48h-12q-20 0-28 16M950 1056q4-40 24-46q-30-4-38 16M974 1012q70-6 64 36q-20 50-168 70q-60 0-62-38M908 1068q8 4 12-2M950 1056q8 4 12-4"/>
              <path d="M1008 810q-4-16 12-20l180-54q20-4 26 14l4 40q0 10-14 16l-180 54q-14 4-20-14zM1030 790l14 70M1044 784l14 70M1170 744l16 66M1184 740l18 66M1096 824q0-34 26-36q24 4 26 32M1108 822q2-20 14-22q10 2 14 16"/><path fill="#e5ddd6" d="M1074 850q10-30 60-32q50-6 64 26q20 50 28 86q-80 10-150 28z"/><path d="M1080 956q0 84 32 90q80 0 140-40q6-30-26-76M1076 956q-30 4-20 50q6 20 34 18M1232 914q20-14 30 6q20 40 0 54l-14-6M1122 940q8-10 16 0v18q-8 14-16 0zM1185 924q8-10 16 0v18q-8 14-16 0z"/>
              <path d="M1276 690q-10-14 4-16q100-20 130-10q30 24 26 44q-8 6-14-4q-20-30-50-26l-80 8q40-4 60 40q16-10 34 14l80 30q20-4 10 8q0 6-10 6M1414 616q10-8 20 4q40 20 40 50v90M1430 630q30 10 26 40v84"/><circle cx="1312" cy="732" r="45"/><circle cx="1312" cy="732" r="31"/><circle cx="1415" cy="770" r="45"/><circle cx="1415" cy="770" r="31"/>
              <path d="M1340 1070q-30-140-20-160q20-64 80-62q60 6 80 90l22 110q0 14-12 20l-110 28q-30 0-40-26zM1448 990q0-30 26-30q24 0 40 84l-50-4zM1330 984q-20-6-18 30q10 60 22 56M1396 1096v14q-20 4-18 14l4 14h32l-4-44M1410 1120l8 14l46-8q4-4 2-14l-8-26M1434 1092v10q-20 6-16 14"/><circle cx="1391" cy="930" r="58"/><path d="M1354 928q10-12 20 0M1394 920q10-12 20-2M1372 938q10 20 24 0"/>
              <path d="M807 1142h60q30 10 14 50q-14 40-74 38M807 1160l66 78q6 0 4-8l-60-66M826 1170v30l-16 2M1080 1092l42 4l-10 34h22l-38 54l4-44h-24zM1160 1230q4-30 16-34l28-2l-8 40M1176 1206h24"/><ellipse cx="1150" cy="1232" rx="10" ry="7"/><ellipse cx="1187" cy="1236" rx="10" ry="7"/>
              <path d="M860 1290l10-40l130-44q14-2 20 10l20 44M930 1260l66-20q8 2 4 12M1246 1258q20-60 70-80q40 0 40 10q60 4 62 44q-4 16-20 16M1356 1188q-30 0-36 36M1424 1224q0-60 60-64q80 0 110 90l36 10M1430 1180q40 0 80 44M1440 1232q20-24 70 0l4 30M1360 1258q60-24 90 10"/>
            </g>
            <g id="gT" transform="translate(1,541) scale(.33333)">
              <path d="M714 290q-6-24 6-34q20 8 22 28q-12 20-28 6zM742 250q-4-20 10-18q20 8 20 28q-14 10-30-10zM780 250q-4-16 10-18q20 6 18 24q-14 20-28-6zM712 304q-4-10 10-6q20 10 20 28q-20 10-30-22zM752 290q-4-20 20-16h36M752 290v44q0 10 12 10h28M864 364q10-8 20-2l30 44q0 10-12 10q-6-2-38-52z"/><circle cx="836" cy="320" r="48"/><circle cx="836" cy="320" r="29"/>
              <path d="M984 108q4-6 14-4l200 14q10 0 10 14l-10 160q0 14-14 14l-200-12q-14-2-14-16l8-160zM1006 128q20 20 4 50q-16-20-4-50zM1128 172l40 28v60M1128 186q-6-10 6-18l44 30v60"/><circle cx="1091" cy="200" r="69"/><circle cx="1091" cy="200" r="25"/><circle cx="1091" cy="200" r="3"/><circle cx="1170" cy="272" r="13"/>
              <path d="M1370 130q0-90 130-90M1370 130l28 80q10 60-30 100q-44 50-100 50q-10-10 0-40q60-40 50-106q20 10 4 60M1320 150q20 0 26 60q10 40 30 50q20 4 20-50M1310 190q-20 50-60 70q-60 40-30 120q30 60 120 54l76-8M1390 370q0-20 30-40M1390 370q-10 90 60 100q50 10 70 60l-60 40M1270 430q-30 40-10 80q40 20 100 14q24 4 4 20l-60 20q30 10 60 0q40-30-14-74q-30-4-20-20q40 0 120-2M1230 280q20 10 10 20M1210 344q20 0 24 20t-20 16M1246 406q20-10 32 12M1316 420q20-20 38 6M1346 320q20-36 36-6M1310 280q16 0 24 20"/>
              <path d="M1394 160q60-24 100-20M1394 160q10 60 50 50q30-10 22-60M1408 168q50-20 46 0q0 30-24 32q-18-6-22-32z"/>
              <path d="M1084 420q0-8 8-12l90-26q8-2 12 6l18 50l-14 34l-50 16l-14 18l-10-12l-14 2q-4 0-8-8zM1118 434l50-20M1120 444l50-20M1124 454l46-18M1186 466l12-10l10 4l-10-16l-14 4M1200 456l30-8l-18 22l-10-6z"/>
              <g stroke-width="6" stroke="#d6cdc7"><path d="M822 512q-32-36 2-52q36-4 38 20q2 20-6 30q20-36 40-30q24 12 14 32q-10 14-40 18q38 0 36 24q-8 28-34 20q-16-8-20-30q0 50-20 54q-36 0-32-26q4-16 18-30q-26 24-42 6q-16-24 0-34q20-12 46-2z"/><circle cx="846" cy="529" r="6"/><path d="M846 520v-12M856 526l12-6M854 536l10 8M840 538l-6 12M838 528h-14"/></g>
              <path d="M1100 598q20-40 60-48l2-20l20 12q34 10 50 2q10-16 14-18l2 22l12 22q-30-10-52 12q-50 40-108 16zM1144 554q20 30 8 62M1160 580q20-16 34-8q4 8-14 10"/><circle cx="1130" cy="583" r="2"/>
              <path d="M966 540q0-16 18-16q30-4 28 14q-4 14-18 14l6 48M966 540l8 62M968 555l26-2M970 572l26-2M972 588l26-2M942 656l4-30q0-10 10-12l60-14q14-4 20 10l6 30M876 740q10-80 120-96q120-24 136 50q-10 70-60 86h-150q-40-10-46-40zM850 740q-20-40 4-44q20 10 4 44l20 20q-20 10-24 16l-6-20z"/><circle cx="1019" cy="712" r="51"/><circle cx="1019" cy="712" r="27"/><circle cx="1019" cy="712" r="39" stroke-dasharray="1 29" stroke-width="7"/>
              <circle cx="1234" cy="671" r="14"/><path d="M1226 636h16l4 12l12 2l10 12l-6 10l8 12l-8 12l-12 0l-6 10h-16l-6-10l-14-2l-8-12l6-10l-8-12l8-12h12z"/>
              <circle cx="1345" cy="612" r="16"/><ellipse cx="1398" cy="608" rx="21" ry="25"/><circle cx="1451" cy="620" r="16"/><path d="M1342 694q0-50 50-54q50 6 50 56q-40 8-100-2zM1306 672q10-40 52-34q-16 14-20 34q-14 6-32 0zM1434 650q44-4 48 34q-14 4-32-4M1470 700q20 10 30 60M1474 702q0 40 26 56"/>
            </g>
          </g>
          <use href="#doodle" x="760"/>
        </svg>

        <div class="relative flex flex-col gap-[10px] px-10 pt-10 text-base leading-6 whitespace-nowrap">
          <div class="h-[59px] w-[101px] self-end rounded-lg bg-[#dcf8c6] pt-3 pr-[10px] text-right"><p class="pr-[6px]">Hello Ade</p><p class="text-[9px] leading-4 text-[#808080]">12:36 PM</p></div>
          <div class="h-[59px] w-[116px] rounded-lg bg-[#f5f5f5] pt-3 pr-[10px] pl-[14.5px]"><p>Hai Nawang</p><p class="text-right text-[9px] leading-4 text-[#808080]">12:36 PM</p></div>
          <div class="h-[59px] w-[172px] self-end rounded-lg bg-[#dcf8c6] pt-3 pr-[10px] text-right"><p class="pr-[6px]">How are you today?</p><p class="text-[9px] leading-4 text-[#808080]">12:49 PM</p></div>
          <div class="h-[59px] w-[92px] rounded-lg bg-[#f5f5f5] pt-3 pr-[10px] pl-[14.5px]"><p>I am fine</p><p class="text-right text-[9px] leading-4 text-[#808080]">4:39 PM</p></div>
          <div class="h-[59px] w-[96px] rounded-lg bg-[#f5f5f5] pt-3 pr-[10px] pl-[14.5px]"><p>And You?</p><p class="text-right text-[9px] leading-4 text-[#808080]">4:39 PM</p></div>
          <div class="h-[59px] w-[224px] self-end rounded-lg bg-[#dcf8c6] pt-3 pr-[10px] text-right"><p class="pr-[6px]">Yeah, Where are you from?</p><p class="text-[9px] leading-4 text-[#808080]">4:40 PM</p></div>
          <div class="h-[59px] w-[201px] rounded-lg bg-[#f5f5f5] pt-3 pr-[10px] pl-[14.5px]"><p>I come from Yogyakarta</p><p class="text-right text-[9px] leading-4 text-[#808080]">4:41 PM</p></div>
          <div class="h-[59px] w-[212px] rounded-lg bg-[#f5f5f5] pt-3 pr-[10px] pl-[14.5px]"><p>Thanks, Nice to meet you</p><p class="text-right text-[9px] leading-4 text-[#808080]">4:41 PM</p></div>
          <div class="h-[59px] w-[60px] self-end rounded-lg bg-[#dcf8c6] pt-3 pr-[10px] text-right"><p class="pr-[6px]">Ok</p><p class="text-[9px] leading-4 text-[#808080]">4:41 PM</p></div>
        </div>
      </section>

      <footer class="flex flex-1 items-center pr-[22px] pl-[22px] text-[#757575]">
        <svg class="mb-px size-6" fill="currentColor"><use href="#i-smile"/></svg>
        <svg class="mb-px ml-6 size-6" fill="currentColor"><use href="#i-clip"/></svg>
        <input class="ml-[27px] h-[55px] w-[980px] rounded-[10px] bg-[#f4f4f4] px-5 font-['Liberation_Sans'] text-[13.333px] tracking-normal outline-none placeholder:text-[#757575]" placeholder="Type a message">
        <svg class="mb-px ml-auto size-6" fill="currentColor"><use href="#i-mic"/></svg>
      </footer>
    </main>
  </div>
</div>

<script>
// Small repeated wallpaper motifs, as x,y,size triples.
// c: circles  s: stars  k: sparkles  o: clouds  h: hearts
const motifs = {
  gP: {
    c: [884,39,12,956,42,19,1103,38,10,932,93,8,923,172,7,983,203,8,918,213,13,1003,228,8,991,262,9,1027,287,8,1129,147,9,1175,152,7,1142,179,13,1162,217,7,1208,229,7,1204,267,12,1164,280,7,1134,301,8,1080,314,14,1026,320,4,886,355,16,939,368,7,1006,362,13,1222,386,9,995,409,9,1186,446,7,1232,438,11,1072,471,8,1020,484,12,875,521,7,941,525,12,1018,525,7,815,487,8,1060,622,16,1077,688,8,1206,645,9,1162,970,21,912,1008,8,1098,1000,7,866,1051,12,939,1050,16,1004,1066,7,1144,1041,13,958,1085,12,1185,1090,12,933,1158,9,815,1057,9],
    s: [1090,247,34,1064,1034,34,822,325,34], k: [1138,668,28,977,461,42,851,962,44,1218,330,28,812,560,38], o: [836,118,96,876,450,84]
  },
  gQ: {
    c: [77,32,14,139,48,10,25,64,12,66,82,8,197,60,8,216,80,8,255,43,16,104,100,16,87,196,10,6,198,16,338,32,9,447,53,8,508,48,12,593,58,18,656,36,6,405,156,8,412,193,8,362,265,17,415,250,9,458,239,8,522,237,9,643,152,5,660,196,8,709,172,10,762,167,9,804,126,9,845,116,9,840,74,15,872,34,13,913,55,8,816,177,16,758,217,12,920,219,11,981,234,7,984,187,11,994,124,9,1028,212,15,1104,103,8,1123,74,9,1055,73,8,1100,30,14,445,299,9,415,356,6,289,345,11,295,379,4,253,378,8,297,409,8,346,409,5,252,427,6,57,456,8,88,495,9,228,468,9,426,492,10,484,484,8,454,448,5,693,331,8,678,378,16,736,382,7,887,440,11,1118,325,10,1130,379,15,1156,426,7,1162,482,8,1155,243,9,379,550,13,259,571,8,368,596,9,28,587,7,38,633,7,14,671,12,163,660,8,133,709,10,268,745,7,252,791,7,150,807,8,60,815,17,24,879,11,215,841,18,276,862,7,534,812,10,590,821,10,621,848,8,567,879,16,494,956,15,443,967,16,345,978,10,361,1011,8,397,997,8,135,950,7,113,1001,15,178,1001,8,600,1068,9,732,1016,14,764,973,9,826,920,8,868,936,9,833,875,13,857,843,8,899,834,7,912,782,18,928,858,8,778,875,9,770,566,7,1058,522,12,1056,594,8,1091,601,11,1068,755,11,1116,747,11,1126,779,7,1114,877,11,1117,915,8,1165,930,16,1153,996,11,1134,1050,12,1168,1217,9,802,1170,8,859,1162,8,923,1176,13,908,1228,8,1061,1259,12,469,1245,14,591,1232,8,622,1248,9],
    s: [42,147,34,152,471,40,659,563,44,562,759,32,43,1068,37], k: [388,81,38,42,261,32,405,411,30,713,253,38,310,619,44,893,698,36,1055,143,30,972,1230,28], o: [170,150,114,1140,540,108], h: [278,108,54,213,920,66]
  },
  gR: {
    c: [49,29,14,4,73,8,73,74,9,55,103,8,242,35,8,238,77,7,281,103,12,241,157,11,276,171,10,362,60,7,446,55,17,402,96,14,436,134,9,509,62,13,400,27,9,795,50,11,732,107,13,680,149,10,734,156,10,425,190,16,480,200,7,516,209,9,603,211,12,757,209,9,340,219,12,391,219,8,105,243,9,387,265,16,428,278,9,565,260,9,626,267,9,683,278,8,745,276,23,67,325,10,190,343,12,365,343,11,324,377,11,79,379,15,195,398,7,152,412,7,107,427,7,114,482,8,696,332,15,735,360,10,778,353,8,684,382,9,538,373,15,587,390,8,546,418,9,497,414,9,9,522,12,218,549,8,165,578,9,209,593,7,232,628,9,40,600,11,8,594,7,512,566,13,701,550,7,783,531,8,773,597,12,774,657,13,750,738,12,795,763,10,409,694,13,417,735,8,461,747,6,520,774,11,402,775,7,562,813,7,215,789,8,156,747,10,66,747,10,19,754,11,288,857,8,315,875,11,310,919,12,279,950,8,349,985,10,64,876,11,67,915,8,115,930,15,153,973,8,102,996,11,84,1050,12,529,902,7,670,842,9,678,884,8,722,856,13,781,840,16,621,950,12,741,1125,17,782,1091,12,527,1149,16,573,1163,9,767,1172,13,327,1171,9,152,1181,13],
    s: [338,141,35,160,40,38,685,207,35,602,876,33], k: [180,232,32,451,362,43,514,487,36,486,686,38,580,34,38], o: [157,138,116,269,284,112,665,80,82]
  },
  gU: {
    c: [60,658,9,32,725,8,329,598,13,367,601,12,557,677,8,596,660,12,919,615,13,1041,602,8,1071,618,10,1091,664,17,1034,665,9,945,743,13,981,722,8,797,851,14,829,892,8,775,908,12,1160,807,9,1211,808,14,1132,828,8,1358,598,8,1369,658,16,1405,682,9,1477,676,16,1252,541,9,1309,532,8,1373,545,13,1331,960,11,989,1036,14,1029,1059,10,1081,1087,17,1150,1074,8,1186,1077,11,1287,1050,9,1295,1082,6,961,1131,9,999,1101,9],
    s: [968,655,34,1468,1015,34,740,780,40], k: [1061,840,34,1422,599,28], o: [1057,752,116]
  },
  gV: {
    c: [45,30,8,118,46,10,12,91,13,287,47,13,213,104,11,249,139,17,283,194,9,302,268,8,4,181,8,425,79,10,446,30,10,479,9,8,411,4,11,580,23,8,622,54,12,737,44,9,722,94,12,766,5,12,596,144,9,782,163,13,724,192,17,686,230,10,737,255,13,723,312,17,766,361,10,795,411,14,47,369,9,13,393,7,85,416,15,185,431,9,286,418,16,320,443,8,428,395,9,451,372,8,487,395,13,54,467,13,115,479,16,163,487,9,77,505,7,353,498,7,503,538,9,321,535,8,345,581,9,219,668,13,701,532,19,759,500,14,745,560,10,624,569,13,697,624,11,730,700,9,704,748,16,754,740,8,459,705,7,439,746,9,381,757,10,484,759,10,440,798,16,517,788,9,580,854,9,580,896,8,226,983,11,251,1025,15,302,1017,8,416,999,8,407,1031,14,227,1068,9,285,1065,8,233,1106,10,236,1155,12,273,1182,5,657,1044,10,720,1091,10,765,1102,9,679,1115,15,767,1159,13,590,1185,8,602,1225,17,451,1210,11,395,1225,17,346,1221,14,454,1247,5,781,1226,10,91,690,9,67,706,6,96,725,4,44,569,8,21,548,7,10,576,4,800,547,10],
    s: [220,25,32,768,642,33,523,1219,34], k: [272,349,36,380,425,36,616,961,36,160,1178,32]
  },
  gS: {
    c: [840,117,8,819,303,12,814,184,8,1109,58,13,1147,61,11,1020,254,8,1020,380,8,1081,381,8,1124,385,18,1166,343,8,1271,339,9,1308,335,5,1356,354,19,1434,292,10,1404,321,7,1466,301,4,1290,405,16,1343,430,9,1385,417,8,1365,502,13,1365,542,8,1389,580,17,1478,600,8,988,560,9,839,689,16,1000,669,16,1203,658,8,1219,627,8,1260,645,10,1343,632,11,1222,697,13,1149,701,9,1088,704,9,1033,719,7,1060,737,7,836,764,8,1034,911,9,1482,819,12,1235,1050,10,1278,1052,13,1198,1077,9,1161,1087,8,1179,1123,10,1036,1107,12,1161,1165,8,1235,1171,12,1021,1149,12,983,1147,9,946,1139,6,926,1174,12,1050,1197,9,1098,1238,9,1555,287,12,1532,342,8,1515,395,9,1565,365,8],
    s: [962,315,33,1073,457,31,1266,1121,34,1515,240,40], k: [938,606,40,962,752,28,1280,845,36,780,240,36], h: [1452,364,60]
  },
  gT: {
    c: [673,338,11,705,369,8,740,377,8,754,181,9,724,149,12,827,187,14,863,173,7,918,174,7,931,110,9,750,424,16,801,404,8,842,419,12,720,457,10,732,508,15,736,564,8,711,627,7,799,634,16,845,633,9,898,640,14,830,664,6,794,692,9,930,345,12,951,303,8,1073,369,8,1114,355,17,1165,343,7,982,423,16,1039,410,8,1058,459,9,949,458,8,967,489,12,1006,488,4,1080,515,14,1041,542,9,1085,566,12,1266,212,14,1279,160,10,1000,249,10,1250,99,6,1423,539,12,1283,596,10,1147,663,7,1174,702,9,1197,760,17,1233,750,8,1372,746,8,1395,765,9,970,80,9],
    s: [910,243,33,1203,127,33,1298,752,40], h: [1005,348,60]
  }
};
const NS = 'http://www.w3.org/2000/svg';
const polar = (x, y, r, deg) => (x + r * Math.cos(deg * Math.PI / 180)).toFixed(1) + ' ' + (y + r * Math.sin(deg * Math.PI / 180)).toFixed(1);
function each3(a, fn) { let d = ''; for (let i = 0; a && i < a.length; i += 3) d += fn(a[i], a[i + 1], a[i + 2]); return d; }
for (const [id, m] of Object.entries(motifs)) {
  let d = each3(m.c, (x, y, r) => `M${x - r} ${y}a${r} ${r} 0 1 0 ${2 * r} 0a${r} ${r} 0 1 0 ${-2 * r} 0z`);
  d += each3(m.s, (x, y, r) => { let p = ''; for (let i = 0; i < 10; i++) p += (i ? 'L' : 'M') + polar(x, y, i % 2 ? r * .54 : r, -80 + i * 36); return p + 'z'; });
  d += each3(m.k, (x, y, r) => { let p = 'M' + polar(x, y, r, -85); for (let i = 0; i < 4; i++) p += 'Q' + polar(x, y, r * .16, -40 + i * 90) + ' ' + polar(x, y, r, 5 + i * 90); return p + 'z'; });
  d += each3(m.o, (x, y, w) => { const u = w / 100; return `M${x - 44 * u} ${y + 30 * u}q${-12 * u} ${-34 * u} ${20 * u} ${-38 * u}q${18 * u} ${-38 * u} ${50 * u} ${-16 * u}q${26 * u} ${-6 * u} ${24 * u} ${16 * u}q${12 * u} ${34 * u} ${-28 * u} ${38 * u}q${-56 * u} ${14 * u} ${-66 * u} 0z`; });
  d += each3(m.h, (x, y, w) => { const u = w / 60; return `M${x + 8 * u} ${y + 28 * u}q${-40 * u} ${-14 * u} ${-38 * u} ${-34 * u}q${8 * u} ${-20 * u} ${28 * u} ${-6 * u}q${14 * u} ${-24 * u} ${30 * u} ${-8 * u}q${6 * u} ${24 * u} ${-20 * u} ${48 * u}z`; });
  const p = document.createElementNS(NS, 'path');
  p.setAttribute('d', d);
  document.getElementById(id).appendChild(p);
}
</script>
</body>
</html>
